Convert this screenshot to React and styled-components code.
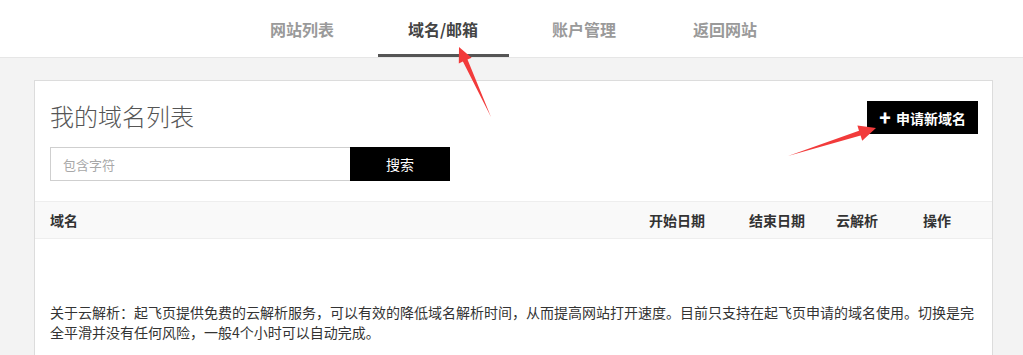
import React from 'react';
import styled, {createGlobalStyle} from 'styled-components';

const GlobalStyle = createGlobalStyle`
body {
    margin: 0;
    background: #f3f3f3;
    font-family: "Noto Sans CJK SC", "Noto Sans", sans-serif;
    color: #333;
}
`

const tabs = ['网站列表', '域名/邮箱', '账户管理', '返回网站']
const columns = ['域名', '开始日期', '结束日期', '云解析', '操作']

const App = () => {
    return (
        <Page>
            <GlobalStyle/>
            <Nav>
                {tabs.map((tab, index) => (
                    <Tab key={tab} active={index === 1}>{tab}</Tab>
                ))}
            </Nav>
            <Card>
                <TopRow>
                    <Title>我的域名列表</Title>
                    <AddButton><Plus>✚</Plus>申请新域名</AddButton>
                </TopRow>
                <SearchRow>
                    <SearchInput placeholder="包含字符"/>
                    <SearchButton>搜索</SearchButton>
                </SearchRow>
                <TableHead>
                    {columns.map((col) => (
                        <HeadCell key={col}>{col}</HeadCell>
                    ))}
                </TableHead>
                <Note>
                    关于云解析：起飞页提供免费的云解析服务，可以有效的降低域名解析时间，从而提高网站打开速度。目前只支持在起飞页申请的域名使用。切换是完全平滑并没有任何风险，一般4个小时可以自动完成。
                </Note>
            </Card>
            <Arrows width="1023" height="355" viewBox="0 0 1023 355">
                <polygon fill="#f23b3b" points="459,47 471.6,57.7 467.5,59.6 491,117 462.9,61.6 458.8,63.5"/>
                <polygon fill="#f23b3b" points="876,128 862.2,140.8 860.6,135.6 788,156 859,130.8 857.4,125.6"/>
            </Arrows>
        </Page>
    );
}

const Page = styled.div`
position: relative;
min-height: 355px;
overflow: hidden;
`
const Nav = styled.div`
display: flex;
justify-content: center;
height: 57px;
padding-left: 4px;
background: #fff;
border-bottom: 1px solid #e6e6e6;
`
const Tab = styled.div`
width: 131px;
margin: 0 5px;
box-sizing: border-box;
display: flex;
align-items: center;
justify-content: center;
font-size: 16px;
font-weight: bold;
color: ${p => p.active ? '#444' : '#9a9a9a'};
border-bottom: 3px solid ${p => p.active ? '#555' : 'transparent'};
padding-top: 3px;
`
const Card = styled.div`
margin: 22px 30px 0 34px;
background: #fff;
border: 1px solid #dcdcdc;
padding-bottom: 60px;
`
const TopRow = styled.div`
display: flex;
justify-content: space-between;
align-items: flex-start;
padding: 20px 14px 0 15px;
`
const Title = styled.h1`
margin: 0;
font-size: 24px;
line-height: 30px;
font-weight: 300;
color: #555;
`
const AddButton = styled.button`
display: flex;
align-items: center;
height: 33px;
width: 111px;
padding: 0 0 0 12px;
border: none;
background: #000;
color: #fff;
font-family: inherit;
font-size: 14px;
font-weight: bold;
`
const Plus = styled.span`
font-size: 12px;
margin-right: 5px;
`
const SearchRow = styled.div`
display: flex;
margin: 13px 0 0 15px;
`
const SearchInput = styled.input`
width: 300px;
height: 34px;
box-sizing: border-box;
border: 1px solid #cfcfcf;
border-right: none;
padding: 0 12px;
font-family: inherit;
font-size: 13px;
outline: none;
&::placeholder {
    color: #a8a8a8;
}
`
const SearchButton = styled.button`
width: 100px;
height: 34px;
border: none;
background: #000;
color: #fff;
font-family: inherit;
font-size: 14px;
`
const TableHead = styled.div`
display: grid;
grid-template-columns: 1fr 100px 87px 87px 69px;
align-items: center;
height: 36px;
margin-top: 20px;
background: #f9f9f9;
border-top: 1px solid #eee;
border-bottom: 1px solid #eee;
div:first-child {
    padding-left: 15px;
}
`
const HeadCell = styled.div`
font-size: 14px;
font-weight: bold;
color: #333;
`
const Note = styled.p`
margin: 63px 0 0;
padding: 0 15px;
font-size: 14px;
line-height: 20px;
color: #333;
`
const Arrows = styled.svg`
position: absolute;
left: 0;
top: 0;
pointer-events: none;
`
export default App;
